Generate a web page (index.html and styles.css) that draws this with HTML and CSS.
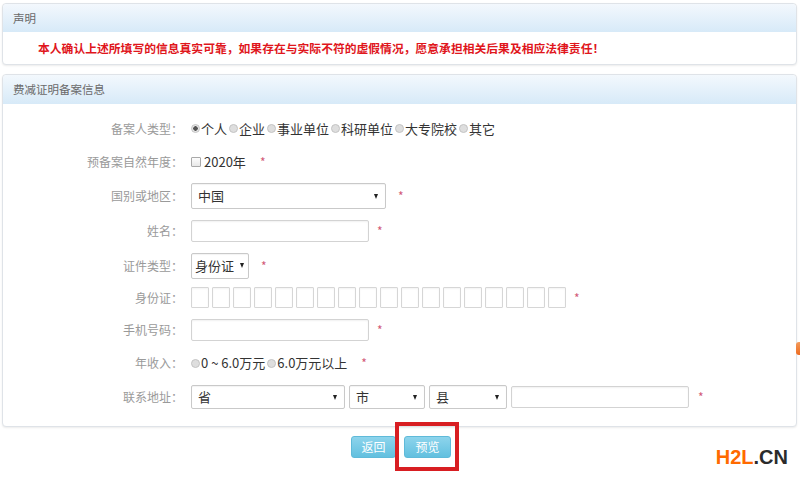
FILE: index.html
```html
<!DOCTYPE html>
<html lang="zh-CN">

<head>
    <meta charset="UTF-8">
    <meta name="viewport" content="width=device-width, initial-scale=1.0">
    <title>费减证明备案信息</title>
    <link rel="stylesheet" href="styles.css">
</head>

<body>

<div class="panel panel-notice">
    <div class="panel-head">声明</div>
    <div class="panel-body notice">本人确认上述所填写的信息真实可靠，如果存在与实际不符的虚假情况，愿意承担相关后果及相应法律责任！</div>
</div>

<div class="panel panel-form">
    <div class="panel-head head-tall">费减证明备案信息</div>
    <div class="panel-body form">

        <div class="row h33">
            <span class="lbl">备案人类型：</span>
            <div class="ctl">
                <label class="opt"><input type="radio" name="type" checked>个人</label>
                <label class="opt"><input type="radio" name="type">企业</label>
                <label class="opt"><input type="radio" name="type">事业单位</label>
                <label class="opt"><input type="radio" name="type">科研单位</label>
                <label class="opt"><input type="radio" name="type">大专院校</label>
                <label class="opt"><input type="radio" name="type">其它</label>
            </div>
        </div>

        <div class="row">
            <span class="lbl">预备案自然年度：</span>
            <div class="ctl">
                <label class="opt"><input type="checkbox" class="check"> 2020年</label>
                <span class="star star-wide">*</span>
            </div>
        </div>

        <div class="row">
            <span class="lbl">国别或地区：</span>
            <div class="ctl">
                <div class="select sel-country"><span>中国</span><i></i></div>
                <span class="star star-wide">*</span>
            </div>
        </div>

        <div class="row h36">
            <span class="lbl">姓名：</span>
            <div class="ctl">
                <input type="text" class="text">
                <span class="star">*</span>
            </div>
        </div>

        <div class="row h33">
            <span class="lbl">证件类型：</span>
            <div class="ctl">
                <div class="select sel-cert"><span>身份证</span><i></i></div>
                <span class="star star-wide">*</span>
            </div>
        </div>

        <div class="row h31">
            <span class="lbl">身份证：</span>
            <div class="ctl">
                <div class="idboxes">
                    <input type="text" class="idbox"><input type="text" class="idbox"><input type="text" class="idbox">
                    <input type="text" class="idbox"><input type="text" class="idbox"><input type="text" class="idbox">
                    <input type="text" class="idbox"><input type="text" class="idbox"><input type="text" class="idbox">
                    <input type="text" class="idbox"><input type="text" class="idbox"><input type="text" class="idbox">
                    <input type="text" class="idbox"><input type="text" class="idbox"><input type="text" class="idbox">
                    <input type="text" class="idbox"><input type="text" class="idbox"><input type="text" class="idbox">
                </div>
                <span class="star">*</span>
            </div>
        </div>

        <div class="row h33">
            <span class="lbl">手机号码：</span>
            <div class="ctl">
                <input type="text" class="text">
                <span class="star">*</span>
            </div>
        </div>

        <div class="row">
            <span class="lbl">年收入：</span>
            <div class="ctl">
                <label class="opt"><input type="radio" name="income">0 ~ 6.0万元</label>
                <label class="opt"><input type="radio" name="income">6.0万元以上</label>
                <span class="star star-wide">*</span>
            </div>
        </div>

        <div class="row">
            <span class="lbl">联系地址：</span>
            <div class="ctl addr">
                <div class="select sel-prov"><span>省</span><i></i></div>
                <div class="select sel-city"><span>市</span><i></i></div>
                <div class="select sel-county"><span>县</span><i></i></div>
                <input type="text" class="text">
                <span class="star">*</span>
            </div>
        </div>

    </div>
</div>

<div class="actions">
    <button class="btn">返回</button>
    <div class="mark">
        <button class="btn btn-wide">预览</button>
        <span class="mark-box"></span>
    </div>
</div>

<span class="edge"></span>
<div class="logo"><span class="logo-h">H2L</span>.CN</div>

</body>
</html>
```

FILE: styles.css
```css
body {
    margin: 0;
    font-family: "Noto Sans CJK SC", "Liberation Sans", sans-serif;
    font-size: 12px;
    color: #333;
    background-color: #fff;
    position: relative;
    height: 481px;
    overflow: hidden;
}

.panel {
    margin: 3px 3px 0 2px;
    border: 1px solid #dfe3e8;
    border-radius: 4px;
    box-shadow: 0 1px 2px rgba(0, 0, 0, 0.08);
    background-color: #fff;
}

.panel-form {
    margin-top: 9px;
}

.panel-head {
    height: 28px;
    line-height: 28px;
    padding-left: 10px;
    color: #6a6a6a;
    font-size: 11.5px;
    background: linear-gradient(#f3f8fd, #d7eaf8);
    border-radius: 4px 4px 0 0;
}

.head-tall {
    height: 29px;
    line-height: 29px;
}

.notice {
    height: 32px;
    line-height: 32px;
    padding-left: 35px;
    color: #e0161c;
    font-weight: bold;
    font-size: 11.8px;
    white-space: nowrap;
}

.form {
    padding: 8px 0 12px 0;
}

.row {
    display: flex;
    align-items: center;
    height: 34px;
}

.h33 { height: 33px; }
.h36 { height: 36px; }
.h31 { height: 31px; }

.lbl {
    width: 180px;
    text-align: right;
    color: #9a9a9a;
    font-size: 12px;
    line-height: 16px;
    flex-shrink: 0;
}

.ctl {
    display: flex;
    align-items: center;
    margin-left: 8px;
    font-size: 13px;
    line-height: 18px;
    color: #333;
}

.opt {
    display: flex;
    align-items: center;
    margin-right: 2px;
    white-space: nowrap;
}

.opt input[type="radio"] {
    appearance: none;
    width: 9px;
    height: 9px;
    margin: 0 1px 0 0;
    border: 1px solid #c4c4c4;
    border-radius: 50%;
    background-color: #dedede;
}

.opt input[type="radio"]:checked {
    background: radial-gradient(circle, #555 0, #555 2px, #e6e6e6 2.5px);
}

.check {
    appearance: none;
    width: 10px;
    height: 10px;
    margin: 0 3px 0 0;
    border: 1px solid #a9a9a9;
    border-radius: 1px;
    background: linear-gradient(#fdfdfd, #e8e8e8);
}

.star {
    color: #d25a78;
    font-size: 12px;
    margin-left: 8px;
}

.star-wide {
    margin-left: 12px;
}

.select {
    display: flex;
    align-items: center;
    justify-content: space-between;
    box-sizing: border-box;
    height: 24px;
    padding: 0 7px 0 6px;
    border: 1px solid #c9c9c9;
    border-radius: 2px;
    background-color: #fff;
    box-shadow: inset 0 1px 1px rgba(0, 0, 0, 0.05);
}

.select i {
    width: 0;
    height: 0;
    border-left: 2.5px solid transparent;
    border-right: 2.5px solid transparent;
    border-top: 5px solid #222;
}

.sel-country {
    width: 195px;
    height: 26px;
}

.sel-cert {
    width: 58px;
    height: 26px;
    padding: 0 4px 0 3px;
}

.sel-prov {
    width: 154px;
}

.sel-city {
    width: 76px;
}

.sel-county {
    width: 78px;
}

.text {
    box-sizing: border-box;
    width: 178px;
    height: 22px;
    margin: 0;
    border: 1px solid #d3d3d3;
    border-radius: 2px;
    box-shadow: inset 0 1px 2px rgba(0, 0, 0, 0.06);
}

.idboxes {
    display: flex;
    gap: 3px;
}

.idbox {
    box-sizing: border-box;
    width: 18px;
    height: 21px;
    margin: 0;
    padding: 0;
    border: 1px solid #d6d6d6;
    border-radius: 1px;
    box-shadow: inset 0 1px 2px rgba(0, 0, 0, 0.05);
}

.addr {
    gap: 4px;
}

.addr .star {
    margin-left: 5px;
}

.actions {
    display: flex;
    justify-content: center;
    gap: 8px;
    margin-top: 9px;
    padding-left: 2px;
}

.btn {
    height: 22px;
    width: 45px;
    padding: 0;
    border: 1px solid #5fbad9;
    border-radius: 3px;
    background: linear-gradient(#8dd4ec, #62c0df);
    color: #fff;
    font-family: "Noto Sans CJK SC", sans-serif;
    font-size: 12px;
    line-height: 18px;
}

.btn-wide {
    width: 47px;
}

.mark {
    position: relative;
    display: flex;
}

.mark-box {
    position: absolute;
    left: -9px;
    top: -14px;
    width: 56px;
    height: 41px;
    border: 4px solid #d81e22;
}

.edge {
    position: absolute;
    right: 0;
    top: 342px;
    width: 4px;
    height: 13px;
    background: linear-gradient(#f39a5a, #ee6b1f);
    border-radius: 3px 0 0 3px;
}

.logo {
    position: absolute;
    right: 12px;
    top: 446px;
    font-family: "Liberation Sans", Arial, sans-serif;
    font-weight: bold;
    font-size: 20px;
    color: #2b2b2b;
}

.logo-h {
    color: #ff6a00;
}
```
